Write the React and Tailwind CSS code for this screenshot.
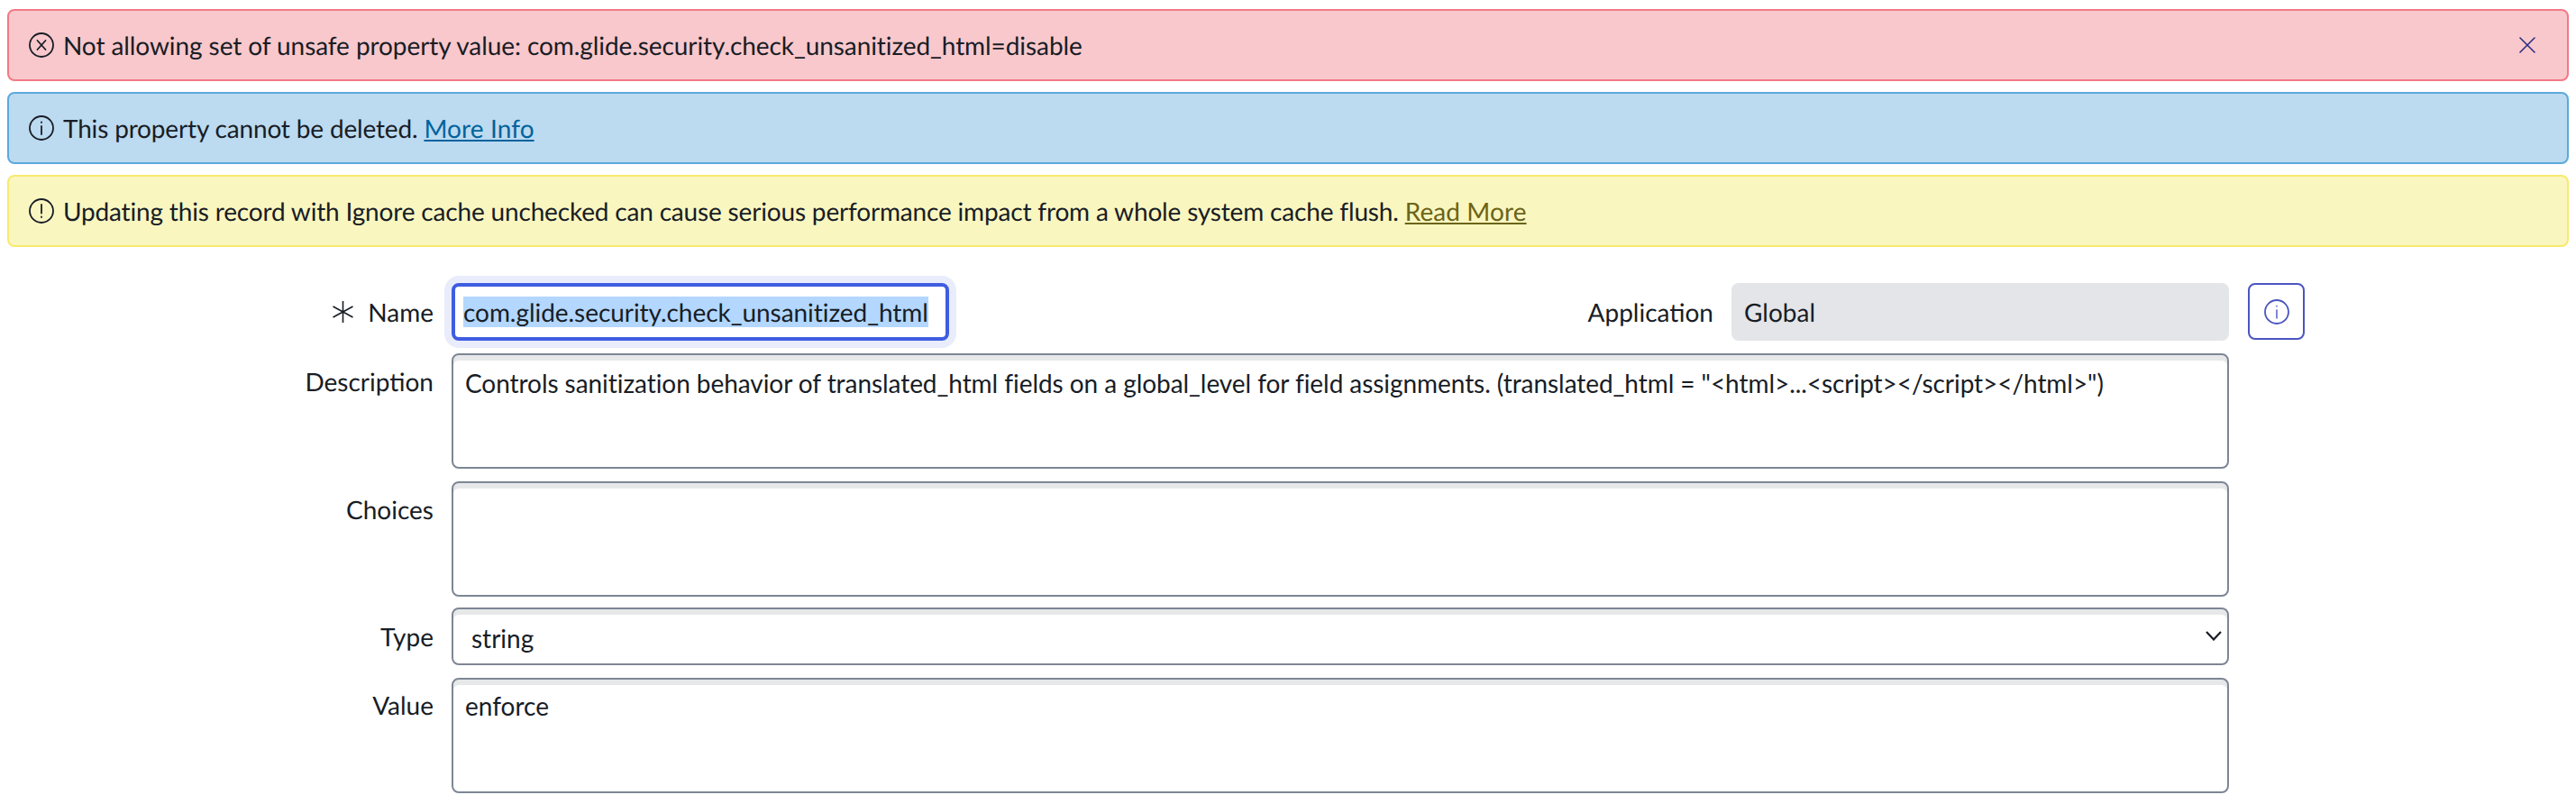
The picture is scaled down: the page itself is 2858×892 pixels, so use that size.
const Circle = ({ children, className = "" }) => (
  <svg viewBox="0 0 28 28" fill="none" stroke="currentColor" strokeWidth="1.8" strokeLinecap="round" className={`w-7 h-7 shrink-0 ${className}`}>
    <circle cx="14" cy="14" r="13" />
    {children}
  </svg>
);

const Alert = ({ bg, icon, children, close }) => (
  <div className={`flex items-center h-20 rounded-lg border-2 pl-[22px] pr-[35px] gap-[10px] ${bg}`}>
    {icon}
    <div className="flex-1 whitespace-nowrap">{children}</div>
    {close && (
      <svg viewBox="0 0 18 18" fill="none" stroke="#2a2f7f" strokeWidth="1.6" strokeLinecap="round" className="w-[18px] h-[18px]">
        <path d="M1 1 L17 17 M17 1 L1 17" />
      </svg>
    )}
  </div>
);

const Label = ({ children, className = "" }) => (
  <label className={`text-right leading-8 ${className}`}>{children}</label>
);

const boxed = "block w-full border-2 border-[#7e8694] rounded-lg bg-white shadow-[inset_0_6px_0_#e6e8e9] text-[#181d26] outline-none resize-none";

export default function App() {
  return (
    <div className="w-[2858px] h-[892px] overflow-hidden bg-white px-2 pt-[10px] font-[Lato,sans-serif] text-[28px] text-[#181d26] [text-rendering:geometricPrecision]">
      <div className="flex flex-col gap-3">
        <Alert
          bg="bg-[#f9c8cc] border-[#f27985]"
          close
          icon={<Circle><path d="M9.5 9 L18.5 19 M18.5 9 L9.5 19" /></Circle>}
        >
          <span className="tracking-[-0.08px]">Not allowing set of unsafe property value: com.glide.security.check_unsanitized_html=disable</span>
        </Alert>
        <Alert
          bg="bg-[#bcdaf0] border-[#5ca9dd]"
          icon={<Circle><path d="M14 12 V21 M14 7.5 V8" /></Circle>}
        >
          <span className="tracking-[-0.16px]">This property cannot be deleted. <a className="underline text-[#00639e] tracking-[0.1px]">More Info</a></span>
        </Alert>
        <Alert
          bg="bg-[#faf6c0] border-[#f7ea6e]"
          icon={<Circle><path d="M14 7 V16.5 M14 20.5 V21" /></Circle>}
        >
          <span className="tracking-[-0.17px]">Updating this record with Ignore cache unchecked can cause serious performance impact from a whole system cache flush. <a className="underline text-[#6b6418] tracking-[0.1px]">Read More</a></span>
        </Alert>
      </div>

      <div className="grid grid-cols-[473px_1972px_auto] gap-x-5 gap-y-[14px] mt-10">
        <Label className="flex items-center justify-end gap-[15px] h-16">
          <svg viewBox="0 0 25 24" fill="none" stroke="#181d26" strokeWidth="1.6" className="w-[25px] h-6">
            <path d="M12.5 0 V24 M1.5 6 L23.5 18 M23.5 6 L1.5 18" />
          </svg>
          <span>Name</span>
        </Label>
        <div className="flex items-center h-16">
          <div className="w-[552px] h-16 rounded-lg border-4 border-[#3f5de0] bg-white ring-8 ring-[#e9ecfb] flex items-center pl-[9px]">
            <span className="bg-[#b3d7ff] h-[34px] leading-[34px] whitespace-nowrap tracking-[-0.05px]">com.glide.security.check_unsanitized_html</span>
          </div>
          <label className="flex-1 text-right pr-5">Application</label>
          <div className="w-[552px] h-16 rounded-lg bg-[#e4e5e9] flex items-center pl-[14px]">Global</div>
        </div>
        <button className="ml-px w-[63px] h-[63px] rounded-lg border-2 border-[#4a55c0] flex items-center justify-center text-[#4a55c0]">
          <Circle><path d="M14 12 V21 M14 7.5 V8" strokeWidth="1.4" /></Circle>
        </button>

        <Label className="pt-[15px]">Description</Label>
        <textarea
          readOnly
          className={`${boxed} h-32 px-[13px] pt-[15px] leading-8 tracking-[-0.06px]`}
          defaultValue={'Controls sanitization behavior of translated_html fields on a global_level for field assignments. (translated_html = "<html>...<script></script></html>")'}
        />
        <div />

        <Label className="pt-[15px]">Choices</Label>
        <textarea readOnly className={`${boxed} h-32 px-[13px] pt-4 leading-8`} />
        <div />

        <Label className="flex items-center justify-end h-16 -mt-[2px]">Type</Label>
        <div className="relative -mt-[2px]">
          <select className={`${boxed} h-16 appearance-none pl-5 pt-1`} defaultValue="string">
            <option value="string">string</option>
          </select>
          <svg viewBox="0 0 18 11" fill="none" stroke="#181d26" strokeWidth="2.2" className="absolute right-[8px] top-[26px] w-[18px] h-[11px] pointer-events-none">
            <path d="M1 1 L9 9.5 L17 1" />
          </svg>
        </div>
        <div />

        <Label className="pt-[14px]">Value</Label>
        <textarea readOnly className={`${boxed} h-32 px-[13px] pt-[13px] leading-8`} defaultValue="enforce" />
        <div />
      </div>
    </div>
  );
}
